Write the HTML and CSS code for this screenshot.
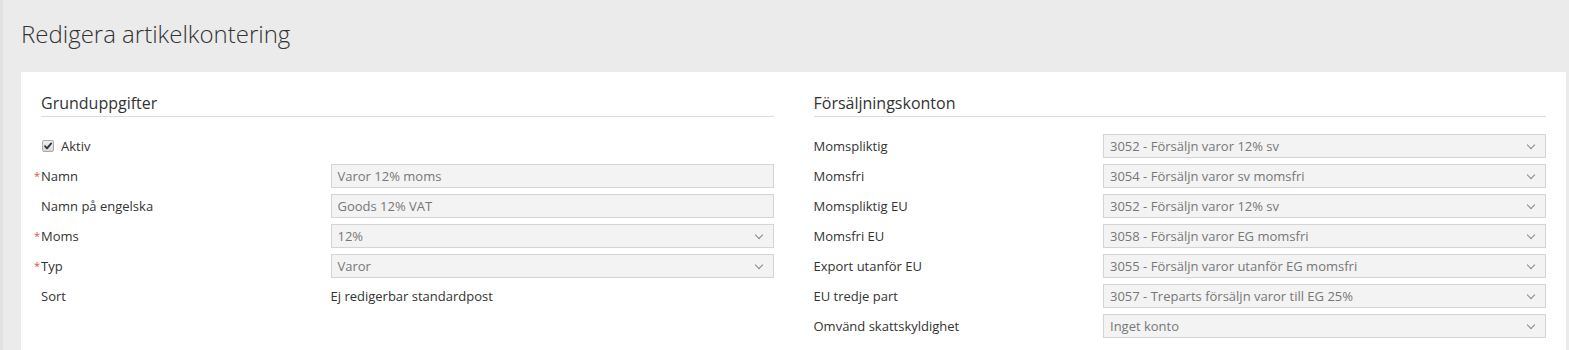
FILE: index.html
```html
<!DOCTYPE html>
<html lang="sv">
<head>
    <meta charset="UTF-8">
    <meta name="viewport" content="width=device-width, initial-scale=1.0">
    <title>Redigera artikelkontering</title>
    <link rel="stylesheet" href="styles.css">
</head>
<body>
    <div class="page">
        <h1 class="page-title">Redigera artikelkontering</h1>

        <div class="panel">
            <div class="section">
                <h3 class="section-title">Grunduppgifter</h3>

                <div class="form-row">
                    <label class="check-label">
                        <span class="checkbox">
                            <svg viewBox="0 0 12 12" width="12" height="12">
                                <path d="M3 6.2 L5 8.4 L9.2 3.4" fill="none" stroke="#333" stroke-width="1.8" stroke-linecap="round" stroke-linejoin="round"/>
                            </svg>
                        </span>
                        Aktiv
                    </label>
                </div>
                <div class="form-row">
                    <span class="field-label required">Namn</span>
                    <div class="field-input">Varor 12% moms</div>
                </div>
                <div class="form-row">
                    <span class="field-label">Namn på engelska</span>
                    <div class="field-input">Goods 12% VAT</div>
                </div>
                <div class="form-row">
                    <span class="field-label required">Moms</span>
                    <div class="field-input select">12%</div>
                </div>
                <div class="form-row">
                    <span class="field-label required">Typ</span>
                    <div class="field-input select">Varor</div>
                </div>
                <div class="form-row">
                    <span class="field-label">Sort</span>
                    <div class="field-text">Ej redigerbar standardpost</div>
                </div>
            </div>

            <div class="section">
                <h3 class="section-title">Försäljningskonton</h3>

                <div class="form-row">
                    <span class="field-label">Momspliktig</span>
                    <div class="field-input select">3052 - Försäljn varor 12% sv</div>
                </div>
                <div class="form-row">
                    <span class="field-label">Momsfri</span>
                    <div class="field-input select">3054 - Försäljn varor sv momsfri</div>
                </div>
                <div class="form-row">
                    <span class="field-label">Momspliktig EU</span>
                    <div class="field-input select">3052 - Försäljn varor 12% sv</div>
                </div>
                <div class="form-row">
                    <span class="field-label">Momsfri EU</span>
                    <div class="field-input select">3058 - Försäljn varor EG momsfri</div>
                </div>
                <div class="form-row">
                    <span class="field-label">Export utanför EU</span>
                    <div class="field-input select">3055 - Försäljn varor utanför EG momsfri</div>
                </div>
                <div class="form-row">
                    <span class="field-label">EU tredje part</span>
                    <div class="field-input select">3057 - Treparts försäljn varor till EG 25%</div>
                </div>
                <div class="form-row">
                    <span class="field-label">Omvänd skattskyldighet</span>
                    <div class="field-input select">Inget konto</div>
                </div>
            </div>
        </div>
    </div>
</body>
</html>
```

FILE: styles.css
```css
* {
    margin: 0;
    padding: 0;
    box-sizing: border-box;
}

body {
    font-family: 'Open Sans', 'Liberation Sans', sans-serif;
    font-size: 13px;
    color: #333;
    background: #ebebeb;
    border-left: 3px solid #e2e2e2;
    min-height: 100vh;
}

.page {
    padding: 19px 3px 0 18px;
}

.page-title {
    font-size: 24px;
    font-weight: 300;
    line-height: 30px;
    color: #333;
    margin-bottom: 23px;
}

.panel {
    background: white;
    padding: 20px;
    display: grid;
    grid-template-columns: 1fr 1fr;
    gap: 40px;
    min-height: 300px;
}

.section-title {
    font-size: 16px;
    font-weight: 400;
    line-height: 22px;
    padding-bottom: 2px;
    border-bottom: 1px solid #dcdcdc;
    margin-bottom: 17px;
}

.form-row {
    display: grid;
    grid-template-columns: 289.5px 1fr;
    align-items: center;
    height: 24px;
    margin-bottom: 6px;
}

.field-label {
    position: relative;
}

.field-label.required::before {
    content: "*";
    position: absolute;
    left: -7px;
    top: 1px;
    font-size: 11px;
    color: #d9534f;
}

.check-label {
    display: flex;
    align-items: center;
    gap: 7px;
    padding-left: 1px;
}

.checkbox {
    width: 12px;
    height: 12px;
    border: 1px solid #a9a9a9;
    border-radius: 2px;
    background: linear-gradient(#f0f0f0, #d8d8d8);
    display: flex;
}

.checkbox svg {
    margin: -1px;
}

.field-input {
    height: 24px;
    line-height: 22px;
    padding: 0 6px;
    border: 1px solid #d4d4d4;
    background: #f3f3f3;
    color: #777;
    position: relative;
    white-space: nowrap;
}

.field-input.select::after {
    content: "";
    position: absolute;
    right: 11px;
    top: 7px;
    width: 5px;
    height: 5px;
    border-right: 1px solid #888;
    border-bottom: 1px solid #888;
    transform: rotate(45deg);
}

.field-text {
    color: #333;
}
```
